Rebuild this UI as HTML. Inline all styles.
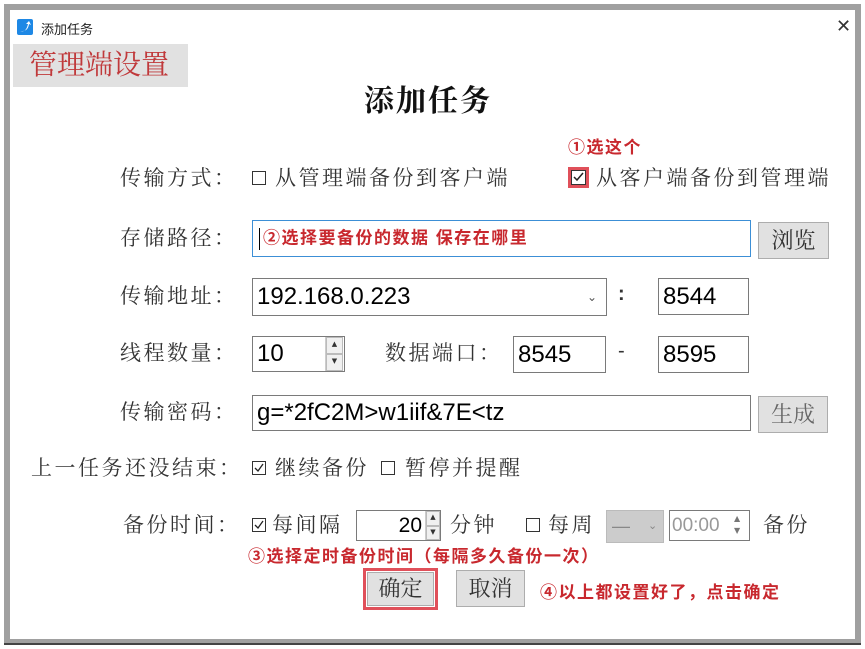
<!DOCTYPE html>
<html><head><meta charset="utf-8"><style>
*{margin:0;padding:0;box-sizing:border-box}
body{width:865px;height:649px;background:#fff;position:relative;overflow:hidden;font-family:"Liberation Serif","Noto Serif CJK SC","Noto Serif CJK JP",serif}
.a{position:absolute;white-space:nowrap}
.lbl{font-size:21px;letter-spacing:2.5px;color:#333;line-height:26px}
.inp{position:absolute;border:1px solid #7a7a7a;background:#fff;font-family:"Liberation Sans",sans-serif;font-size:24px;color:#000;padding-left:4px;white-space:nowrap}
.btn{position:absolute;background:#e1e1e1;border:1px solid #adadad;font-size:22px;color:#333;text-align:center}
.red{color:#c8282e;font-weight:bold;font-family:"Liberation Sans","Noto Sans CJK SC",sans-serif;font-size:17px;letter-spacing:1.5px}
.cb{position:absolute;width:14px;height:14px;border:1.5px solid #333;background:#fff}
.sp{position:absolute;border-left:1px solid #ccc}
.sp div{height:50%;font-size:7px;text-align:center;color:#333;font-family:"DejaVu Sans",sans-serif;border:1px solid #bbb;background:#f0f0f0;line-height:12px}
</style></head><body>
<div class="a" style="left:4px;top:4px;width:857px;height:640px;border:6px solid #a0a0a0;border-bottom-width:5px;border-right-width:6px"></div>
<div class="a" style="left:4px;top:643px;width:857px;height:2px;background:#444"></div>
<div class="a" style="left:17px;top:19px;width:16px;height:16px;background:#1e88e5;border-radius:2px"><svg width="16" height="16"><path d="M3 12 Q9 14 11 5 L9 5 L12 2 L14 6 L12 5 Q11 13 3 12Z" fill="#fff"/></svg></div>
<div class="a" style="left:41px;top:19px;font-size:13px;color:#222;font-family:'Liberation Sans','Noto Sans CJK SC',sans-serif">添加任务</div>
<div class="a" style="left:836px;top:16px;font-size:18px;color:#333;font-family:'DejaVu Sans',sans-serif">✕</div>
<div class="a" style="left:13px;top:44px;width:175px;height:43px;background:#e1e1e1;color:#c0393b;font-size:28px;line-height:43px;padding-left:16px">管理端设置</div>
<div class="a" style="left:364px;top:76px;font-size:30px;letter-spacing:2px;font-weight:bold;color:#111">添加任务</div>
<div class="a red" style="left:568px;top:133px">①选这个</div>
<div class="a lbl" style="left:120px;top:165px">传输方式：</div>
<div class="cb" style="left:252px;top:171px"></div>
<div class="a lbl" style="left:275px;top:165px">从管理端备份到客户端</div>
<div class="a" style="left:568px;top:167px;width:21px;height:21px;border:3px solid #e0505a"></div>
<div class="cb" style="left:571px;top:170px;width:15px;height:15px"><svg width="12" height="12" style="position:absolute;left:0;top:0"><path d="M2 6 L5 9 L11 2" stroke="#222" stroke-width="1.5" fill="none"/></svg></div>
<div class="a lbl" style="left:596px;top:165px">从客户端备份到管理端</div>
<div class="a lbl" style="left:120px;top:225px">存储路径：</div>
<div class="inp" style="left:252px;top:220px;width:499px;height:37px;border:1.5px solid #3c8fd6;line-height:34px;padding-left:6px"><span style="display:inline-block;width:1px;height:22px;background:#000;vertical-align:middle;margin-right:3px"></span><span class="red" style="vertical-align:middle">②选择要备份的数据 保存在哪里</span></div>
<div class="btn" style="left:758px;top:222px;width:71px;height:37px;line-height:35px">浏览</div>
<div class="a lbl" style="left:120px;top:283px">传输地址：</div>
<div class="inp" style="left:252px;top:278px;width:355px;height:38px;line-height:36px">192.168.0.223<span style="position:absolute;left:334px;top:0;font-size:12px;color:#555">⌄</span></div>
<div class="a" style="left:618px;top:283px;font-size:20px;font-weight:bold;color:#333;font-family:'Liberation Sans',sans-serif">:</div>
<div class="inp" style="left:658px;top:278px;width:91px;height:37px;line-height:35px">8544</div>
<div class="a lbl" style="left:120px;top:340px">线程数量：</div>
<div class="inp" style="left:252px;top:336px;width:93px;height:36px;line-height:34px">10</div>
<div class="sp" style="left:325px;top:337px;width:18px;height:34px"><div>▲</div><div>▼</div></div>
<div class="a lbl" style="left:385px;top:340px">数据端口：</div>
<div class="inp" style="left:513px;top:336px;width:93px;height:37px;line-height:35px">8545</div>
<div class="a" style="left:618px;top:340px;font-size:20px;color:#333;font-family:'Liberation Sans',sans-serif">-</div>
<div class="inp" style="left:658px;top:336px;width:91px;height:37px;line-height:35px">8595</div>
<div class="a lbl" style="left:120px;top:399px">传输密码：</div>
<div class="inp" style="left:252px;top:395px;width:499px;height:36px;line-height:34px">g=*2fC2M&gt;w1iif&amp;7E&lt;tz</div>
<div class="btn" style="left:758px;top:396px;width:70px;height:37px;line-height:35px;color:#666">生成</div>
<div class="a lbl" style="left:31px;top:455px">上一任务还没结束：</div>
<div class="cb" style="left:252px;top:461px"><svg width="12" height="12" style="position:absolute;left:0;top:0"><path d="M2 6 L5 9 L10 2" stroke="#222" stroke-width="1.3" fill="none"/></svg></div>
<div class="a lbl" style="left:275px;top:455px">继续备份</div>
<div class="cb" style="left:381px;top:461px"></div>
<div class="a lbl" style="left:405px;top:455px">暂停并提醒</div>
<div class="a lbl" style="left:123px;top:512px">备份时间：</div>
<div class="cb" style="left:252px;top:518px"><svg width="12" height="12" style="position:absolute;left:0;top:0"><path d="M2 6 L5 9 L10 2" stroke="#222" stroke-width="1.3" fill="none"/></svg></div>
<div class="a lbl" style="left:272px;top:512px">每间隔</div>
<div class="inp" style="left:356px;top:510px;width:85px;height:31px;line-height:29px;text-align:right;padding-right:18px;font-size:21px">20</div>
<div class="sp" style="left:425px;top:511px;width:15px;height:29px"><div style="line-height:10px">▲</div><div style="line-height:10px">▼</div></div>
<div class="a lbl" style="left:450px;top:512px">分钟</div>
<div class="cb" style="left:526px;top:518px"></div>
<div class="a lbl" style="left:548px;top:512px">每周</div>
<div class="a" style="left:606px;top:510px;width:58px;height:33px;background:#ccc;border:1px solid #bbb;color:#888;font-size:18px;line-height:30px;padding-left:5px;font-family:'Liberation Sans',sans-serif">—<span style="position:absolute;left:41px;font-size:11px">⌄</span></div>
<div class="inp" style="left:669px;top:510px;width:81px;height:31px;line-height:29px;font-size:19px;color:#999;padding-left:2px">00:00</div>
<div class="a" style="left:734px;top:513px;font-size:8px;color:#777;line-height:12px;font-family:'DejaVu Sans',sans-serif">▲<br>▼</div>
<div class="a lbl" style="left:763px;top:512px">备份</div>
<div class="a red" style="left:248px;top:542px">③选择定时备份时间（每隔多久备份一次）</div>
<div class="a" style="left:363px;top:568px;width:75px;height:42px;border:3px solid #e0505a"></div>
<div class="btn" style="left:367px;top:572px;width:67px;height:34px;line-height:32px">确定</div>
<div class="btn" style="left:456px;top:570px;width:69px;height:37px;line-height:35px">取消</div>
<div class="a red" style="left:540px;top:578px">④以上都设置好了，点击确定</div>
</body></html>
